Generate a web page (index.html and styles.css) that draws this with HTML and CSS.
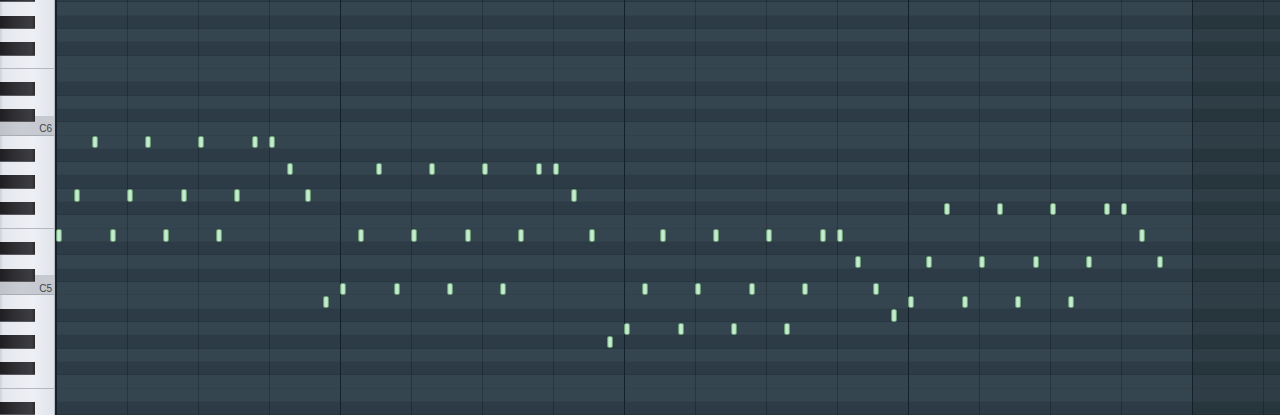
FILE: index.html
```html
<!DOCTYPE html>
<html lang="en">
<head>
    <meta charset="UTF-8">
    <meta name="viewport" content="width=device-width, initial-scale=1.0">
    <title>Piano Roll</title>
    <link rel="stylesheet" href="styles.css">
</head>
<body>
    <div class="piano-roll">
        <div class="keyboard" id="keyboard"></div>
        <div class="grid" id="grid">
            <div class="rows" id="rows"></div>
        </div>
    </div>
    <script>
        const ROW_H = 40 / 3;
        const STEP_W = 17.75;
        const names = ["B", "A#", "A", "G#", "G", "F#", "F", "E", "D#", "D", "C#", "C"];

        // top row is A#6, bottom row is D4
        let rows = [];
        for (let i = 0; i < 33; i++) {
            let idx = (i + 1) % 12;
            let octave = 6 - Math.floor((i + 1) / 12);
            rows.push({ name: names[idx], octave: octave });
        }

        const notes = {
            11: [2, 5, 8, 11, 12],
            13: [13, 18, 21, 24, 27, 28],
            15: [1, 4, 7, 10, 14, 29],
            16: [50, 53, 56, 59, 60],
            18: [0, 3, 6, 9, 17, 20, 23, 26, 30, 34, 37, 40, 43, 44, 61],
            20: [45, 49, 52, 55, 58, 62],
            22: [16, 19, 22, 25, 33, 36, 39, 42, 46],
            23: [15, 48, 51, 54, 57],
            24: [47],
            25: [32, 35, 38, 41],
            26: [31]
        };

        function buildKeyboard() {
            const keyboard = document.getElementById("keyboard");
            rows.forEach(r => {
                const key = document.createElement("div");
                key.className = "key";
                if (r.name.includes("#")) {
                    key.classList.add("black");
                    if (r.name === "C#") key.classList.add("over-c");
                    key.innerHTML = `<span class="black-key"></span>`;
                }
                if (r.name === "C") {
                    key.classList.add("c-key");
                    key.innerHTML = `<span class="label">C${r.octave}</span>`;
                }
                if (r.name === "F") key.classList.add("f-key");
                keyboard.appendChild(key);
            });
        }

        function buildGrid() {
            const rowsEl = document.getElementById("rows");
            const grid = document.getElementById("grid");
            rows.forEach(r => {
                const row = document.createElement("div");
                row.className = r.name.includes("#") ? "row dark" : "row light";
                rowsEl.appendChild(row);
            });
            for (let row in notes) {
                notes[row].forEach(step => {
                    const n = document.createElement("div");
                    n.className = "note";
                    n.style.top = (row * ROW_H + 0.4) + "px";
                    n.style.left = (step * STEP_W + 0.3) + "px";
                    grid.appendChild(n);
                });
            }
        }

        buildKeyboard();
        buildGrid();
    </script>
</body>
</html>
```

FILE: styles.css
```css
body {
    margin: 0;
    height: 415px;
    overflow: hidden;
    background: #2c3b45;
    font-family: "Liberation Sans", Arial, sans-serif;
}
.piano-roll {
    display: flex;
    margin-top: -11.11px;
    height: 440px;
}
.keyboard {
    width: 54px;
    flex-shrink: 0;
    display: flex;
    flex-direction: column;
    border-right: 1px solid #b7bbc3;
    background: linear-gradient(to right, #cdd0d7 0, #e5e7ee 3px, #eef0f5 60%, #e0e3ea 100%);
}
.key {
    height: 13.333px;
    flex-shrink: 0;
    box-sizing: border-box;
    display: flex;
    align-items: stretch;
}
.black-key {
    display: block;
    width: 35px;
    background: linear-gradient(to right, #1f1f22 0, #2f2f33 40%, #3e3e42 90%, #2b2b2e 100%);
    box-shadow: inset 0 -1px 0 #58595e;
}
.over-c {
    background: linear-gradient(to bottom, transparent 50%, #c6c9cf 50%);
}
.c-key {
    background: linear-gradient(to right, #bfc2c8, #c9ccd2 40%, #c4c7cd);
    border-bottom: 1px solid #a8acb3;
    justify-content: flex-end;
    align-items: center;
}
.f-key {
    border-bottom: 1px solid #b3b7bf;
}
.label {
    font-size: 10px;
    color: #3f4247;
    padding-right: 2px;
    padding-top: 1px;
}
.grid {
    flex: 1;
    position: relative;
    border-left: 1px solid #18242d;
}
.rows {
    position: relative;
    display: flex;
    flex-direction: column;
}
.rows::before {
    content: '';
    position: absolute;
    top: 0;
    bottom: 0;
    left: 1136px;
    right: 0;
    background: rgba(0, 0, 0, 0.1);
}
.rows::after {
    content: '';
    position: absolute;
    inset: 0;
    background-image:
        linear-gradient(to right, #15212a 0, #15212a 1px, transparent 1px),
        linear-gradient(to right, rgba(0, 0, 0, 0.22) 0, rgba(0, 0, 0, 0.22) 1px, transparent 1px);
    background-size: 284px 100%, 71px 100%;
}
.row {
    height: 13.333px;
    flex-shrink: 0;
    box-sizing: border-box;
    border-bottom: 1px solid rgba(0, 0, 0, 0.07);
}
.light {
    background: #35454f;
}
.dark {
    background: #2c3b45;
}
.note {
    position: absolute;
    width: 6px;
    height: 12.5px;
    box-sizing: border-box;
    border: 1px solid #6a9a76;
    border-radius: 2px;
    background: linear-gradient(to right, #a2d8ad, #d0f2d7 50%, #a8dbb2);
}
```
